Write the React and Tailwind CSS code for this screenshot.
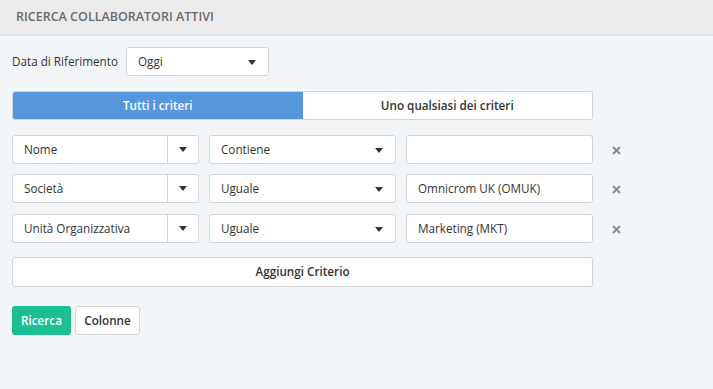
import React from "react";

const Caret = () => (
  <svg width="8" height="5" viewBox="0 0 8 5" className="block">
    <path d="M0 0 L8 0 L4 5 Z" fill="#333" />
  </svg>
);

const XIcon = () => (
  <svg width="9" height="9" viewBox="0 0 9 9" className="block">
    <path d="M1 1 L8 8 M8 1 L1 8" stroke="#8a8a8a" strokeWidth="1.8" />
  </svg>
);

function SplitSelect({ value }) {
  return (
    <div className="flex h-[29px] w-[187px] shrink-0 rounded-[3px] border border-[#d2d4d6] bg-white">
      <div className="flex flex-1 items-center pl-[11px] pt-px text-[#333]">{value}</div>
      <div className="flex w-[31px] items-center justify-center border-l border-[#d2d4d6]">
        <Caret />
      </div>
    </div>
  );
}

function Select({ value, w = "w-[187px]" }) {
  return (
    <div className={`flex h-[29px] ${w} shrink-0 items-center justify-between rounded-[3px] border border-[#d2d4d6] bg-white pl-[11px] pr-[12px] pt-px text-[#333]`}>
      <span>{value}</span>
      <Caret />
    </div>
  );
}

function Input({ value }) {
  return (
    <div className="flex h-[29px] w-[187px] shrink-0 items-center rounded-[3px] border border-[#d2d4d6] bg-white pl-[11px] pt-px text-[#333]">
      {value}
    </div>
  );
}

function Row({ a, b, c, className = "" }) {
  return (
    <div className={`flex items-center gap-[10px] ${className}`}>
      <SplitSelect value={a} />
      <Select value={b} />
      <Input value={c} />
      <div className="ml-[9px] pt-px">
        <XIcon />
      </div>
    </div>
  );
}

export default function App() {
  return (
    <div
      className="h-[389px] w-full bg-[#f3f6f9] text-[11.7px] text-[#333]"
      style={{ fontFamily: '"Open Sans", "Noto Sans", Arial, sans-serif' }}
    >
      <div className="flex h-[36px] items-center border-b-2 border-[#e3e4e5] bg-[#ebebeb] pl-4">
        <span className="text-[12.5px] font-semibold uppercase text-[#6b6b6b]">
          Ricerca Collaboratori Attivi
        </span>
      </div>
      <div className="px-3">
        <div className="mt-[11px] flex items-center gap-[9px]">
          <span className="w-[105px] whitespace-nowrap text-[#333]">Data di Riferimento</span>
          <Select value="Oggi" w="w-[143px]" />
        </div>
        <div className="mt-[15px] flex h-[29px] w-[581px] overflow-hidden rounded-[3px] border border-[#d2d4d6]">
          <div className="flex flex-1 items-center justify-center bg-[#5596dc] font-semibold text-white">
            Tutti i criteri
          </div>
          <div className="flex flex-1 items-center justify-center bg-white font-semibold text-[#333]">
            Uno qualsiasi dei criteri
          </div>
        </div>
        <Row a="Nome" b="Contiene" c="" className="mt-[15px]" />
        <Row a="Società" b="Uguale" c="Omnicrom UK (OMUK)" className="mt-[10px]" />
        <Row a="Unità Organizzativa" b="Uguale" c="Marketing (MKT)" className="mt-[11px]" />
        <button className="mt-[14px] flex h-[30px] w-[581px] items-center justify-center rounded-[3px] border border-[#d2d4d6] bg-white font-semibold text-[#333]">
          Aggiungi Criterio
        </button>
        <div className="mt-[19px] flex gap-[4px]">
          <button className="flex h-[29px] w-[59px] items-center justify-center rounded-[3px] bg-[#1cbf94] font-semibold text-white">
            Ricerca
          </button>
          <button className="flex h-[29px] w-[65px] items-center justify-center rounded-[3px] border border-[#d2d4d6] bg-white font-semibold text-[#333]">
            Colonne
          </button>
        </div>
      </div>
    </div>
  );
}
